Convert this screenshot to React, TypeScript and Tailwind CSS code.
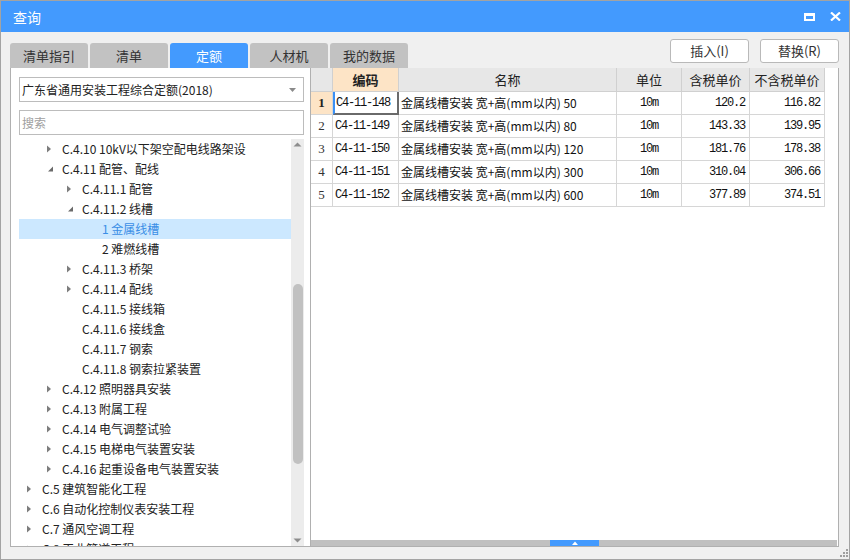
import React from "react";

type Node = { label: string; level: number; state: "c" | "e" | "n"; selected?: boolean };

const tree: Node[] = [
  { label: "C.4.10 10kV以下架空配电线路架设", level: 2, state: "c" },
  { label: "C.4.11 配管、配线", level: 2, state: "e" },
  { label: "C.4.11.1 配管", level: 3, state: "c" },
  { label: "C.4.11.2 线槽", level: 3, state: "e" },
  { label: "1 金属线槽", level: 4, state: "n", selected: true },
  { label: "2 难燃线槽", level: 4, state: "n" },
  { label: "C.4.11.3 桥架", level: 3, state: "c" },
  { label: "C.4.11.4 配线", level: 3, state: "c" },
  { label: "C.4.11.5 接线箱", level: 3, state: "n" },
  { label: "C.4.11.6 接线盒", level: 3, state: "n" },
  { label: "C.4.11.7 钢索", level: 3, state: "n" },
  { label: "C.4.11.8 钢索拉紧装置", level: 3, state: "n" },
  { label: "C.4.12 照明器具安装", level: 2, state: "c" },
  { label: "C.4.13 附属工程", level: 2, state: "c" },
  { label: "C.4.14 电气调整试验", level: 2, state: "c" },
  { label: "C.4.15 电梯电气装置安装", level: 2, state: "c" },
  { label: "C.4.16 起重设备电气装置安装", level: 2, state: "c" },
  { label: "C.5 建筑智能化工程", level: 1, state: "c" },
  { label: "C.6 自动化控制仪表安装工程", level: 1, state: "c" },
  { label: "C.7 通风空调工程", level: 1, state: "c" },
  { label: "C.8 工业管道工程", level: 1, state: "c" },
];

const rows = [
  { code: "C4-11-148", size: "50", p1: "120.2", p2: "116.82" },
  { code: "C4-11-149", size: "80", p1: "143.33", p2: "139.95" },
  { code: "C4-11-150", size: "120", p1: "181.76", p2: "178.38" },
  { code: "C4-11-151", size: "300", p1: "310.04", p2: "306.66" },
  { code: "C4-11-152", size: "600", p1: "377.89", p2: "374.51" },
];

const tabs = ["清单指引", "清单", "定额", "人材机", "我的数据"];

const padFor: Record<number, string> = {
  1: "pl-[8px]",
  2: "pl-[28px]",
  3: "pl-[48px]",
  4: "pl-[68px]",
};

function Arrow({ state }: { state: Node["state"] }) {
  if (state === "c")
    return (
      <svg width="15" height="20" viewBox="0 0 15 20" className="shrink-0">
        <polygon points="0,6.5 4,10 0,13.5" fill="#7d7d7d" />
      </svg>
    );
  if (state === "e")
    return (
      <svg width="15" height="20" viewBox="0 0 15 20" className="shrink-0">
        <polygon points="6,7.5 6,12.5 1,12.5" fill="#6a6a6a" />
      </svg>
    );
  return <span className="w-[15px] shrink-0" />;
}

const cell = "border-r border-b border-[#d6d6d6] h-[23px] flex items-center";
const mono = "font-['Liberation_Mono',monospace] text-[12px] tracking-[-1.2px] text-[#111]";

export default function App() {
  return (
    <div className="w-[850px] h-[560px] bg-[#f0f0f0] border border-[#a3a3a3] flex flex-col overflow-hidden font-['Noto_Sans_CJK_SC','Noto_Sans',sans-serif] text-[#222]">
      {/* title bar */}
      <div className="h-[31px] bg-[#439afe] flex items-center justify-between pl-[12px] pr-[8px] text-white shrink-0">
        <span className="text-[14px] leading-none">查询</span>
        <div className="flex items-center gap-[15px]">
          <div className="w-[11px] h-[8px] border-2 border-white border-t-[3px]" />
          <svg width="11" height="9" viewBox="0 0 11 9">
            <path d="M1 0.5 L10 8.5 M10 0.5 L1 8.5" stroke="white" strokeWidth="2.2" />
          </svg>
        </div>
      </div>

      {/* toolbar */}
      <div className="h-[36px] flex justify-between pl-[9px] pr-[10px] shrink-0">
        <div className="flex self-end gap-[2px]">
          {tabs.map((t) => (
            <div
              key={t}
              className={
                "w-[78px] h-[25px] rounded-t-[3px] flex items-center justify-center text-[13px] " +
                (t === "定额" ? "bg-[#439afe] text-white" : "bg-[#c2c2c2] text-[#333]")
              }
            >
              {t}
            </div>
          ))}
        </div>
        <div className="flex gap-[11px] mt-[7px]">
          <div className="w-[79px] h-[24px] bg-white border border-[#b9b9b9] rounded-[3px] flex items-center justify-center text-[13px] text-[#333]">
            插入(I)
          </div>
          <div className="w-[79px] h-[24px] bg-white border border-[#b9b9b9] rounded-[3px] flex items-center justify-center text-[13px] text-[#333]">
            替换(R)
          </div>
        </div>
      </div>

      {/* main */}
      <div className="h-[479px] flex pl-[9px] pr-[10px] shrink-0">
        {/* left panel */}
        <div className="w-[301px] bg-white border-l border-r border-b border-[#b0b0b0] flex flex-col pl-[8px] pr-[6px]">
          <div className="mt-[9px] h-[25px] border border-[#bcbcbc] flex items-center justify-between pl-[2px] pr-[7px]">
            <span className="text-[12px] text-[#222]">广东省通用安装工程综合定额(2018)</span>
            <svg width="7" height="4" viewBox="0 0 7 4">
              <polygon points="0,0 7,0 3.5,4" fill="#8a8a8a" />
            </svg>
          </div>
          <div className="mt-[8px] h-[25px] border border-[#bcbcbc] flex items-center pl-[2px]">
            <span className="text-[12px] text-[#a0a0a0]">搜索</span>
          </div>
          <div className="mt-[4px] flex-1 flex overflow-hidden">
            <div className="flex-1 flex flex-col">
              {tree.map((n) => (
                <div
                  key={n.label}
                  className={
                    "h-[20px] shrink-0 flex items-center text-[12px] " +
                    padFor[n.level] +
                    (n.selected ? " bg-[#cce8ff] text-[#3a8ee6]" : " text-[#222]")
                  }
                >
                  <Arrow state={n.state} />
                  <span className="whitespace-nowrap">{n.label}</span>
                </div>
              ))}
            </div>
            <div className="w-[13px] bg-[#ececec] flex flex-col items-center">
              <svg width="9" height="10" viewBox="0 0 9 10" className="mt-[1px]">
                <polygon points="0.5,6.5 8.5,6.5 4.5,2.5" fill="#8d8d8d" />
              </svg>
              <div className="mt-[134px] w-[10px] h-[180px] rounded-t-[5px] rounded-b-[5px] bg-[#c1c1c1]" />
              <div className="flex-1" />
              <svg width="9" height="10" viewBox="0 0 9 10" className="mb-[1px]">
                <polygon points="0.5,3.5 8.5,3.5 4.5,7.5" fill="#8d8d8d" />
              </svg>
            </div>
          </div>
        </div>

        {/* right panel */}
        <div className="flex-1 bg-white border-r border-b border-[#b0b0b0] flex flex-col">
          <div className="flex-1">
            <div className="grid grid-cols-[22px_66px_218px_65px_68px_75px] w-[514px]">
              {/* header */}
              <div className="h-[24px] bg-[#e7e7e7] border-r border-b border-[#d0d0d0]" />
              <div className="h-[24px] bg-[#fde4c6] border-r border-b border-[#d0d0d0] flex items-center justify-center text-[13px] font-bold text-[#222]">
                编码
              </div>
              <div className="h-[24px] bg-[#e7e7e7] border-r border-b border-[#d0d0d0] flex items-center justify-center text-[13px]">
                名称
              </div>
              <div className="h-[24px] bg-[#e7e7e7] border-r border-b border-[#d0d0d0] flex items-center justify-center text-[13px]">
                单位
              </div>
              <div className="h-[24px] bg-[#e7e7e7] border-r border-b border-[#d0d0d0] flex items-center justify-center text-[13px]">
                含税单价
              </div>
              <div className="h-[24px] bg-[#e7e7e7] border-r border-b border-[#d0d0d0] flex items-center justify-center text-[13px]">
                不含税单价
              </div>
              {rows.map((r, i) => (
                <React.Fragment key={r.code}>
                  <div
                    className={
                      cell +
                      " justify-center font-['Liberation_Serif',serif] text-[13px] " +
                      (i === 0 ? "bg-[#fde4c6] font-bold text-[#222]" : "bg-white text-[#333]")
                    }
                  >
                    {i + 1}
                  </div>
                  {i === 0 ? (
                    <div className="h-[23px] flex items-center border-l-2 border-l-[#3a90f5] border-r-2 border-r-[#6a6a6a] border-b-2 border-b-[#6a6a6a] pl-[1px]">
                      <span className={mono}>{r.code}</span>
                    </div>
                  ) : (
                    <div className={cell + " pl-[2px]"}>
                      <span className={mono}>{r.code}</span>
                    </div>
                  )}
                  <div className={cell + " pl-[2px] text-[12px] text-[#111] whitespace-nowrap overflow-hidden"}>
                    金属线槽安装 宽+高(mm以内) {r.size}
                  </div>
                  <div className={cell + " justify-center"}>
                    <span className={mono}>10m</span>
                  </div>
                  <div className={cell + " justify-end pr-[4px]"}>
                    <span className={mono}>{r.p1}</span>
                  </div>
                  <div className={cell + " justify-end pr-[4px]"}>
                    <span className={mono}>{r.p2}</span>
                  </div>
                </React.Fragment>
              ))}
            </div>
          </div>
          <div className="h-[6px] bg-[#c0c0c0] flex mr-[1px]">
            <div className="ml-[239px] w-[49px] h-[6px] bg-[#439afe] flex items-center justify-center">
              <svg width="6" height="4" viewBox="0 0 6 4">
                <polygon points="0,4 6,4 3,0.5" fill="white" />
              </svg>
            </div>
          </div>
        </div>
      </div>

      {/* bottom strip */}
      <div className="flex-1 flex justify-end items-end pr-[1px] pb-[2px]">
        <div className="grid grid-cols-3 gap-[1px] w-[8px]">
          <span />
          <span />
          <span className="w-[2px] h-[2px] bg-[#a0a0a0]" />
          <span />
          <span className="w-[2px] h-[2px] bg-[#a0a0a0]" />
          <span className="w-[2px] h-[2px] bg-[#a0a0a0]" />
          <span className="w-[2px] h-[2px] bg-[#a0a0a0]" />
          <span className="w-[2px] h-[2px] bg-[#a0a0a0]" />
          <span className="w-[2px] h-[2px] bg-[#a0a0a0]" />
        </div>
      </div>
    </div>
  );
}
